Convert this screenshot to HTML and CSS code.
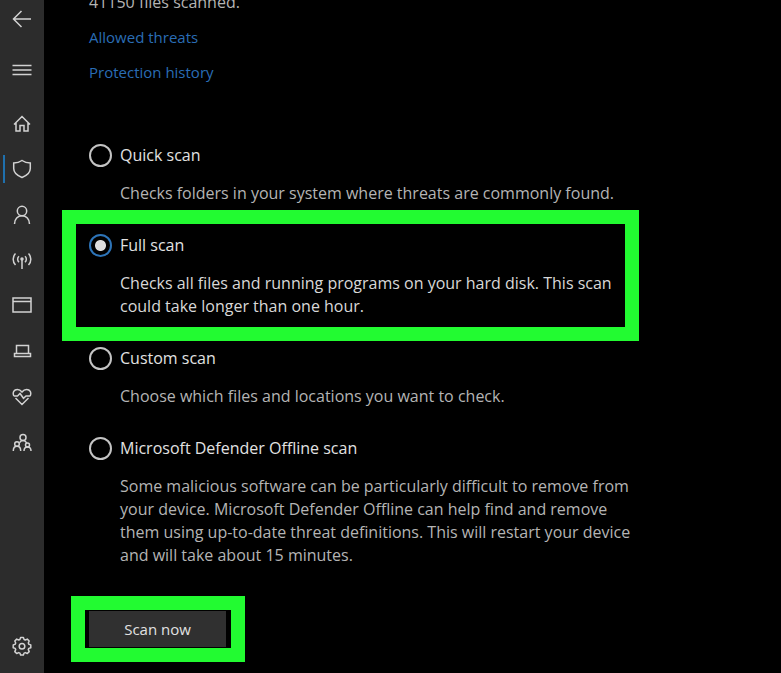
FILE: index.html
```
<!DOCTYPE html>
<html lang="en">
<head>
    <meta charset="utf-8">
    <meta name="viewport" content="width=device-width, initial-scale=1">
    <title>Scan options</title>
    <link rel="stylesheet" href="styles.css">
</head>
<body>
    <div class="app">
        <aside class="sidebar">
            <button class="icon-button back" type="button" aria-label="Back">
                <svg class="icon" viewBox="0 0 20 20"><path d="M19 10H1.500M9.500 2L1.500 10l8 8"/></svg>
            </button>
            <button class="icon-button menu" type="button" aria-label="Menu">
                <svg class="icon" viewBox="0 0 20 20"><path d="M.5 5.500h19M.5 10h19M.5 14.500h19"/></svg>
            </button>
            <nav class="nav">
                <a class="nav-link" href="#home" aria-label="Home">
                    <svg class="icon" viewBox="0 0 20 20"><path d="M2 10.500L10 2.500l8 8M4 9v8h4v-5.500h4V17h4V9"/></svg>
                </a>
                <a class="nav-link active" href="#virus" aria-label="Virus &amp; threat protection">
                    <svg class="icon" viewBox="0 0 20 20"><path d="M10 1.500c2.400 1.700 5 2.500 8.300 2.500v5.500c0 4.200-3.300 7-8.300 9-5-2-8.300-4.800-8.300-9V4C5 4 7.600 3.200 10 1.500z"/></svg>
                </a>
                <a class="nav-link" href="#account" aria-label="Account protection">
                    <svg class="icon" viewBox="0 0 20 20"><circle cx="10" cy="6" r="4.700"/><path d="M2.500 19c0-5 3.300-8.200 7.500-8.200s7.500 3.200 7.500 8.200"/></svg>
                </a>
                <a class="nav-link" href="#firewall" aria-label="Firewall &amp; network protection">
                    <svg class="icon" viewBox="0 0 20 20"><path d="M10 8v10M7 11.300a4 4 0 0 1 0-6M13 11.300a4 4 0 0 0 0-6M3.500 14a8.300 8.300 0 0 1 0-11.500M16.500 14a8.300 8.300 0 0 0 0-11.500"/><circle class="fill" cx="10" cy="8" r="1"/></svg>
                </a>
                <a class="nav-link" href="#apps" aria-label="App &amp; browser control">
                    <svg class="icon" viewBox="0 0 20 20"><path d="M1 2h18v14H1zM1 5.500h18"/></svg>
                </a>
                <a class="nav-link" href="#device" aria-label="Device security">
                    <svg class="icon" viewBox="0 0 20 20"><path d="M4.500 11V3.500h12V11M2.500 11.500h16v3h-16z"/></svg>
                </a>
                <a class="nav-link" href="#health" aria-label="Device performance &amp; health">
                    <svg class="icon" viewBox="0 0 20 20"><path d="M1.800 8C.3 4.500 2 1.500 5.300 1.500c2 0 3.500 1 4.700 2.500 1.200-1.500 2.700-2.500 4.700-2.500C18 1.500 19.700 4.500 18.200 8M3.500 10L10 16.500l6.500-6.500M1.800 8H5.500L8 5.500l3.500 4.800L14 8h4.200"/></svg>
                </a>
                <a class="nav-link" href="#family" aria-label="Family options">
                    <svg class="icon" viewBox="0 0 20 20"><circle cx="11" cy="4.500" r="3"/><circle cx="5" cy="11" r="2.300"/><circle cx="15.500" cy="12" r="2"/><path d="M1.300 18c0-3 1.400-4.700 3.700-4.700S8.700 15 8.700 18M12 18c0-2.500 1.300-4 3.500-4s3.500 1.500 3.500 4M7.500 9.700c.7-1.500 2-2.200 3.500-2.200s2.800.7 3.700 2.500"/></svg>
                </a>
            </nav>
            <button class="icon-button settings" type="button" aria-label="Settings">
                <svg class="icon" viewBox="0 0 20 20"><path stroke-linejoin="round" d="M8.600 1.500h2.800l.7 2 1.200.5 2-.9 1.900 1.900-.9 2 .5 1.200 2 .7v2.800l-2 .7-.5 1.200.9 2-1.900 1.900-2-.9-1.200.5-.7 2H8.600l-.7-2-1.200-.5-2 .9-1.900-1.900.9-2-.5-1.200-2-.7V8.900l2-.7.5-1.200-.9-2 1.900-1.900 2 .9 1.200-.5z"/><circle cx="10" cy="10.300" r="2.800"/></svg>
            </button>
        </aside>

        <main class="content">
            <div class="summary">
                <p>41150 files scanned.</p>
                <a href="#allowed">Allowed threats</a>
                <a href="#history">Protection history</a>
            </div>

            <form class="scan-form">
                <div class="option">
                    <label class="option-label"><input type="radio" name="scan" value="quick" aria-describedby="quick-text">Quick scan</label>
                    <p class="option-text" id="quick-text">Checks folders in your system where threats are commonly found.</p>
                </div>
                <div class="option selected highlight">
                    <label class="option-label"><input type="radio" name="scan" value="full" aria-describedby="full-text" checked>Full scan</label>
                    <p class="option-text" id="full-text">Checks all files and running programs on your hard disk. This scan could take longer than one hour.</p>
                </div>
                <div class="option">
                    <label class="option-label"><input type="radio" name="scan" value="custom" aria-describedby="custom-text">Custom scan</label>
                    <p class="option-text" id="custom-text">Choose which files and locations you want to check.</p>
                </div>
                <div class="option">
                    <label class="option-label"><input type="radio" name="scan" value="offline" aria-describedby="offline-text">Microsoft Defender Offline scan</label>
                    <p class="option-text" id="offline-text">Some malicious software can be particularly difficult to remove from your device. Microsoft Defender Offline can help find and remove them using up-to-date threat definitions. This will restart your device and will take about 15 minutes.</p>
                </div>
                <div class="action highlight">
                    <button class="scan-button" type="button">Scan now</button>
                </div>
            </form>
        </main>
    </div>
</body>
</html>
```
FILE: styles.css
```
* {
    box-sizing: border-box;
}
body {
    margin: 0;
    background-color: #000;
    color: #e6e6e6;
    font-family: "Segoe UI", "Open Sans", "Noto Sans", sans-serif;
    font-size: 16px;
    line-height: 23px;
}
p {
    margin: 0;
}
.app {
    display: flex;
    min-height: 100vh;
}

/* sidebar */
.sidebar {
    display: flex;
    flex-direction: column;
    flex: none;
    width: 44px;
    background-color: #2c2c2c;
}
.icon-button {
    display: flex;
    align-items: center;
    justify-content: center;
    width: 100%;
    padding: 0;
    border: none;
    background: none;
    color: #d2d2d2;
    cursor: pointer;
}
.back {
    height: 38px;
}
.menu {
    height: 63px;
}
.settings {
    height: 54px;
    margin-top: auto;
}
.nav {
    display: grid;
    grid-template-rows: repeat(8, 1fr);
    height: 365px;
}
.nav-link {
    display: flex;
    align-items: center;
    justify-content: center;
    color: #d2d2d2;
    background: linear-gradient(#1f70ad, #1f70ad) no-repeat 3px center / 0 28px;
}
.nav-link.active {
    background-size: 2px 28px;
}
.icon {
    width: 20px;
    height: 20px;
    fill: none;
    stroke: currentColor;
    stroke-width: 1.5;
}
.icon .fill {
    fill: currentColor;
}

/* page */
.content {
    flex: 1;
    min-width: 0;
    padding: 0 24px 12px 45px;
    overflow: hidden;
}
.summary {
    display: flex;
    flex-direction: column;
    align-items: flex-start;
    gap: 12px;
    margin-top: -9px;
    color: #b4b4b4;
}
.summary a {
    color: #2a6db5;
    font-size: 15px;
    text-decoration: none;
}
.scan-form {
    display: flex;
    flex-direction: column;
    align-items: flex-start;
    gap: 28px;
    max-width: 550px;
    margin-top: 59px;
}
.option {
    display: flex;
    flex-direction: column;
    gap: 15px;
}
.option-label {
    display: flex;
    align-items: center;
    gap: 8px;
    height: 24px;
    color: #e2e2e2;
}
.option-label input {
    appearance: none;
    width: 23px;
    height: 23px;
    margin: 0;
    border: 2px solid #c4c4c4;
    border-radius: 50%;
}
.option-label input:checked {
    border-color: #2d74b8;
    background: radial-gradient(circle, #dedede 5px, transparent 6px);
}
.option-text {
    padding-left: 31px;
    color: #b4b4b4;
}
.selected .option-text {
    color: #d8d8d8;
}
.highlight {
    outline: 14px solid #22fb31;
}
.option.highlight {
    max-width: 549px;
    margin: -9px -13px;
    padding: 9px 13px;
}
.action {
    display: flex;
    margin: 15px 0 0 -4px;
    padding: 1px 5px 1px 4px;
}
.scan-button {
    width: 137px;
    height: 36px;
    padding: 0;
    border: none;
    background-color: #303030;
    color: #e2e2e2;
    font: inherit;
    font-size: 15px;
    cursor: pointer;
}
```
